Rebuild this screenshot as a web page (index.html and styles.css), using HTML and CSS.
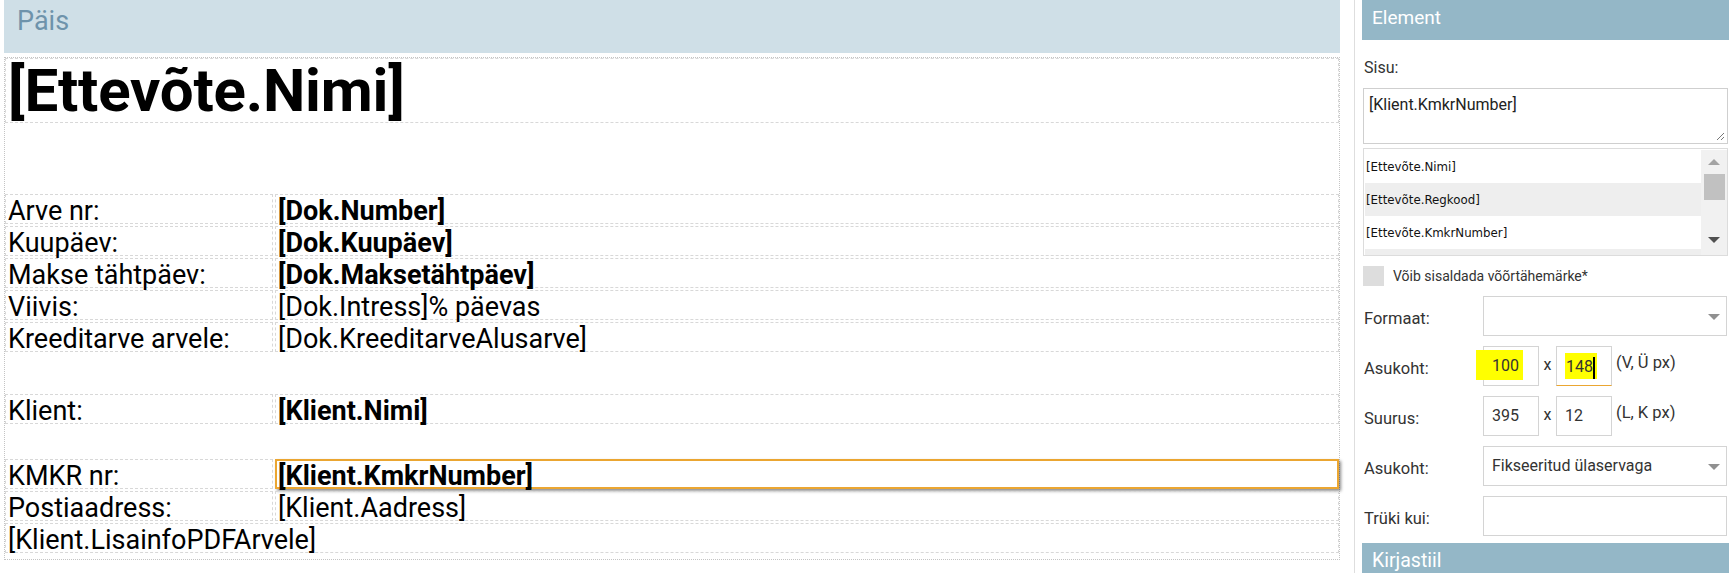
FILE: index.html
```html
<!DOCTYPE html>
<html lang="et">
<head>
<meta charset="utf-8">
<title>Arve kujundus</title>
<link rel="stylesheet" href="styles.css">
</head>
<body>
<div class="designer">
  <div class="band">Päis</div>
  <div class="canvas">
    <div class="el title">[Ettevõte.Nimi]</div>
    <div class="row first">
      <div class="el lab">Arve nr:</div>
      <div class="el val b">[Dok.Number]</div>
    </div>
    <div class="row">
      <div class="el lab">Kuupäev:</div>
      <div class="el val b">[Dok.Kuupäev]</div>
    </div>
    <div class="row">
      <div class="el lab">Makse tähtpäev:</div>
      <div class="el val b">[Dok.Maksetähtpäev]</div>
    </div>
    <div class="row">
      <div class="el lab">Viivis:</div>
      <div class="el val">[Dok.Intress]% päevas</div>
    </div>
    <div class="row">
      <div class="el lab">Kreeditarve arvele:</div>
      <div class="el val">[Dok.KreeditarveAlusarve]</div>
    </div>
    <div class="row klient">
      <div class="el lab">Klient:</div>
      <div class="el val b">[Klient.Nimi]</div>
    </div>
    <div class="row kmkr">
      <div class="el lab">KMKR nr:</div>
      <div class="el val b selected">[Klient.KmkrNumber]</div>
    </div>
    <div class="row">
      <div class="el lab">Postiaadress:</div>
      <div class="el val">[Klient.Aadress]</div>
    </div>
    <div class="row">
      <div class="el full">[Klient.LisainfoPDFArvele]</div>
    </div>
  </div>
</div>
<div class="sep"></div>
<aside class="panel">
  <div class="phead">Element</div>
  <div class="pbody">
    <div class="plabel">Sisu:</div>
    <div class="textarea">[Klient.KmkrNumber]
      <svg class="grip" width="10" height="10" viewBox="0 0 10 10"><path d="M9 2 L2 9 M9 6 L6 9" stroke="#777" stroke-width="1" fill="none"/></svg>
    </div>
    <div class="list">
      <div class="items">
        <div class="item">[Ettevõte.Nimi]</div>
        <div class="item alt">[Ettevõte.Regkood]</div>
        <div class="item">[Ettevõte.KmkrNumber]</div>
        <div class="item alt"></div>
      </div>
      <div class="scroll">
        <span class="arr up"></span>
        <span class="thumb"></span>
        <span class="arr down"></span>
      </div>
    </div>
    <div class="check"><span class="box"></span><span>Võib sisaldada võõrtähemärke*</span></div>
    <div class="form">
      <div class="flabel">Formaat:</div>
      <div class="select"><span class="caret"></span></div>

      <div class="flabel">Asukoht:</div>
      <div class="pair">
        <div class="inp"><mark class="hl hl1">100</mark></div>
        <span class="x">x</span>
        <div class="inp focus"><mark class="hl hl2">148<span class="cursor"></span></mark></div>
        <span class="unit">(V, Ü px)</span>
      </div>

      <div class="flabel">Suurus:</div>
      <div class="pair">
        <div class="inp">395</div>
        <span class="x">x</span>
        <div class="inp">12</div>
        <span class="unit">(L, K px)</span>
      </div>

      <div class="flabel">Asukoht:</div>
      <div class="select">Fikseeritud ülaservaga<span class="caret"></span></div>

      <div class="flabel">Trüki kui:</div>
      <div class="select"></div>
    </div>
  </div>
  <div class="phead kiri">Kirjastiil</div>
</aside>
</body>
</html>
```

FILE: styles.css
```css
* { box-sizing: border-box; }
html, body { margin: 0; padding: 0; }
body {
  font-family: Roboto, "Liberation Sans", sans-serif;
  width: 1729px;
  height: 573px;
  overflow: hidden;
  background: #fff;
  color: #000;
  display: flex;
  align-items: stretch;
}

/* ---------- designer ---------- */
.designer {
  margin-left: 4px;
  width: 1336px;
  flex: none;
}
.band {
  height: 53px;
  background: #cfdfe7;
  color: #6e93ab;
  font-size: 27px;
  line-height: 30px;
  padding: 6px 0 0 13px;
}
.canvas {
  margin-top: 4px;
  height: 503px;
  border: 1px dotted #c4c4c4;
  display: flex;
  flex-direction: column;
}
.el {
  border: 1px dashed #d8d8d8;
  white-space: nowrap;
  overflow: visible;
}
.title {
  height: 65px;
  font-size: 60px;
  font-weight: 700;
  line-height: 62px;
  padding-left: 2px;
  padding-top: 1px;
  letter-spacing: -0.2px;
}
.row {
  display: flex;
  gap: 2px;
  height: 30px;
  margin-top: 2px;
  flex: none;
}
.row.first { margin-top: 71px; }
.row.klient { margin-top: 42px; }
.row.kmkr { margin-top: 35px; }
.lab, .val, .full {
  font-size: 27px;
  line-height: 28px;
  padding: 2px 0 0 2px;
}
.lab { width: 268px; flex: none; }
.val { flex: 1; }
.full { flex: 1; }
.b { font-weight: 700; }
.selected {
  border: 2px solid #eba631;
  box-shadow: 2px 2px 3px rgba(0,0,0,0.45);
  line-height: 26px;
  padding: 2px 0 0 1px;
}

.sep {
  width: 1px;
  background: #dedede;
  margin-left: 14px;
  flex: none;
}

/* ---------- panel ---------- */
.panel {
  margin-left: 7px;
  width: 367px;
  flex: none;
  display: flex;
  flex-direction: column;
}
.phead {
  height: 40px;
  flex: none;
  background: #94b7c7;
  color: #fff;
  font-size: 19px;
  line-height: 24px;
  padding: 6px 0 0 10px;
}
.phead.kiri { margin-top: 7px; font-size: 19.5px; }
.pbody {
  padding: 0 1px;
  color: #333;
}
.plabel {
  margin-top: 19px;
  font-size: 16px;
  line-height: 18px;
  padding-left: 1px;
}
.textarea {
  position: relative;
  margin-top: 11px;
  height: 56px;
  border: 1px solid #cfcfcf;
  font-size: 16px;
  line-height: 19px;
  padding: 6px 5px 4px;
  color: #222;
}
.grip { position: absolute; right: 2px; bottom: 2px; }
.list {
  margin-top: 4px;
  height: 108px;
  border: 1px solid #dcdcdc;
  display: flex;
  overflow: hidden;
  padding: 1px 0 0 1px;
}
.items { flex: 1; }
.item {
  height: 33px;
  line-height: 34px;
  font-family: "DejaVu Sans", Verdana, sans-serif;
  font-size: 11.8px;
  color: #111;
  padding-left: 1px;
  background: #fff;
}
.item.alt { background: #eeeeee; }
.scroll {
  width: 26px;
  flex: none;
  background: #f1f1f1;
  display: flex;
  flex-direction: column;
  align-items: center;
  padding-top: 9px;
}
.arr {
  width: 0; height: 0;
  border-left: 6px solid transparent;
  border-right: 6px solid transparent;
}
.arr.up { border-bottom: 6px solid #a3a3a3; }
.arr.down { border-top: 6px solid #505050; margin-top: 37px; }
.thumb {
  width: 21px;
  height: 26px;
  background: #c1c1c1;
  margin-top: 9px;
}
.check {
  margin-top: 10px;
  height: 20px;
  display: flex;
  align-items: center;
  font-size: 14px;
  color: #333;
}
.check .box {
  width: 21px;
  height: 20px;
  background: #dddddd;
  margin-right: 9px;
}
.form {
  margin-top: 10px;
  display: grid;
  grid-template-columns: 120px 1fr;
  grid-auto-rows: 40px;
  row-gap: 10px;
}
.flabel {
  font-size: 16.5px;
  line-height: 18px;
  padding: 14px 0 0 1px;
  color: #333;
}
.select {
  position: relative;
  border: 1px solid #d4d4d4;
  font-size: 16px;
  line-height: 38px;
  padding-left: 8px;
  color: #333;
  margin-right: 1px;
}
.caret {
  position: absolute;
  right: 6px;
  top: 17px;
  width: 0; height: 0;
  border-left: 6px solid transparent;
  border-right: 6px solid transparent;
  border-top: 6px solid #909090;
}
.pair {
  display: flex;
  align-items: stretch;
  font-size: 16px;
  color: #333;
}
.inp {
  width: 56px;
  border: 1px solid #d4d4d4;
  line-height: 38px;
  padding-left: 8px;
  color: #333;
}
.inp.focus { border-bottom: 1px solid #eba631; }
.x { width: 17px; text-align: center; line-height: 38px; }
.unit { margin-left: 4px; line-height: 34px; font-size: 16.5px; }
.hl {
  background: #ffff00;
  color: #333;
  display: inline-block;
  line-height: 28px;
  vertical-align: top;
  position: relative;
}
.hl1 { margin: 3px 0 0 -16px; padding: 2px 4px 0 16px; }
.hl2 { margin: 6px 0 0 0; padding: 1px 2px 0 1px; line-height: 25px; }
.cursor {
  display: inline-block;
  width: 2px;
  height: 22px;
  background: #000;
  vertical-align: middle;
  margin-left: 0;
}
```
